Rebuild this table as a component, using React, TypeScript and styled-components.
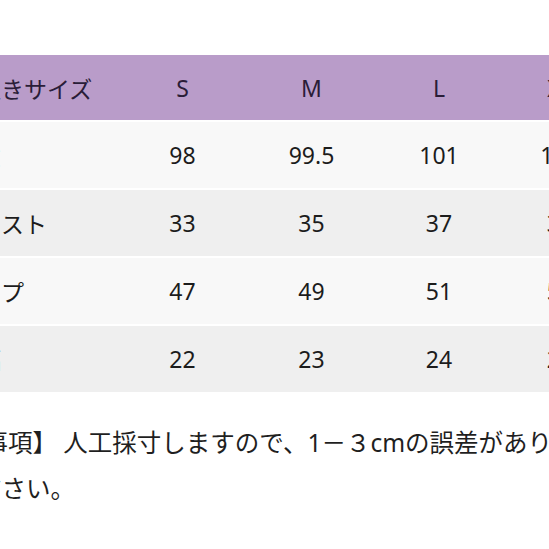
import { FunctionComponent } from "react";
import styled, { createGlobalStyle } from "styled-components";

interface SizeRow {
  label: string;
  values: string[];
}

const sizes = ["S", "M", "L", "XL", "XXL"];

const rows: SizeRow[] = [
  { label: "着丈", values: ["98", "99.5", "101", "103", "104"] },
  { label: "ウエスト", values: ["33", "35", "37", "39", "41"] },
  { label: "ヒップ", values: ["47", "49", "51", "53", "55"] },
  { label: "裾幅", values: ["22", "23", "24", "25", "26"] },
];

const App: FunctionComponent = () => {
  return (
    <Page>
      <Global />
      <Chart>
        <Row $tone="header">
          <LabelCell>平置きサイズ</LabelCell>
          {sizes.map((s) => (
            <ValueCell key={s}>{s}</ValueCell>
          ))}
        </Row>
        {rows.map((row, i) => (
          <Row key={row.label} $tone={i % 2 === 0 ? "light" : "gray"}>
            <LabelCell>{row.label}</LabelCell>
            {row.values.map((v, j) => (
              <ValueCell key={j}>{v}</ValueCell>
            ))}
          </Row>
        ))}
      </Chart>
      <Note>
        <NoteLine>【注意事項】 人工採寸しますので、1－３cmの誤差があります。</NoteLine>
        <NoteLine $shift={-31}>ご了承ください。</NoteLine>
      </Note>
    </Page>
  );
};

export default App;

const Global = createGlobalStyle`
  html, body {
    margin: 0;
    padding: 0;
    background: #ffffff;
  }
  body {
    font-family: "Noto Sans", "Noto Sans CJK JP", sans-serif;
  }
`;

const Page = styled.div`
  width: 549px;
  height: 549px;
  overflow: hidden;
  box-sizing: border-box;
  padding-top: 55px;
  background: #ffffff;
`;

const Chart = styled.div`
  display: flex;
  flex-direction: column;
  gap: 2px;
  margin-left: -60px;
  width: 818px;
`;

const tones = {
  header: { bg: "#b99cc9", color: "#2a1d38", height: 65 },
  light: { bg: "#f8f8f8", color: "#1c1c1c", height: 66 },
  gray: { bg: "#efefef", color: "#1c1c1c", height: 66 },
};

const Row = styled.div<{ $tone: keyof typeof tones }>`
  display: grid;
  grid-template-columns: 178px 129px 129px 126px 116px 128px;
  align-items: center;
  height: ${(p) => tones[p.$tone].height}px;
  background: ${(p) => tones[p.$tone].bg};
  color: ${(p) => tones[p.$tone].color};
  font-size: 23px;
`;

const LabelCell = styled.div`
  padding-left: 15px;
  white-space: nowrap;
`;

const ValueCell = styled.div`
  text-align: center;
  white-space: nowrap;
`;

const Note = styled.div`
  margin-top: 28px;
  margin-left: -90px;
  color: #1f1f1f;
  font-size: 24.5px;
  line-height: 46px;
`;

const NoteLine = styled.div<{ $shift?: number }>`
  white-space: nowrap;
  margin-left: ${(p) => p.$shift ?? 0}px;
`;
